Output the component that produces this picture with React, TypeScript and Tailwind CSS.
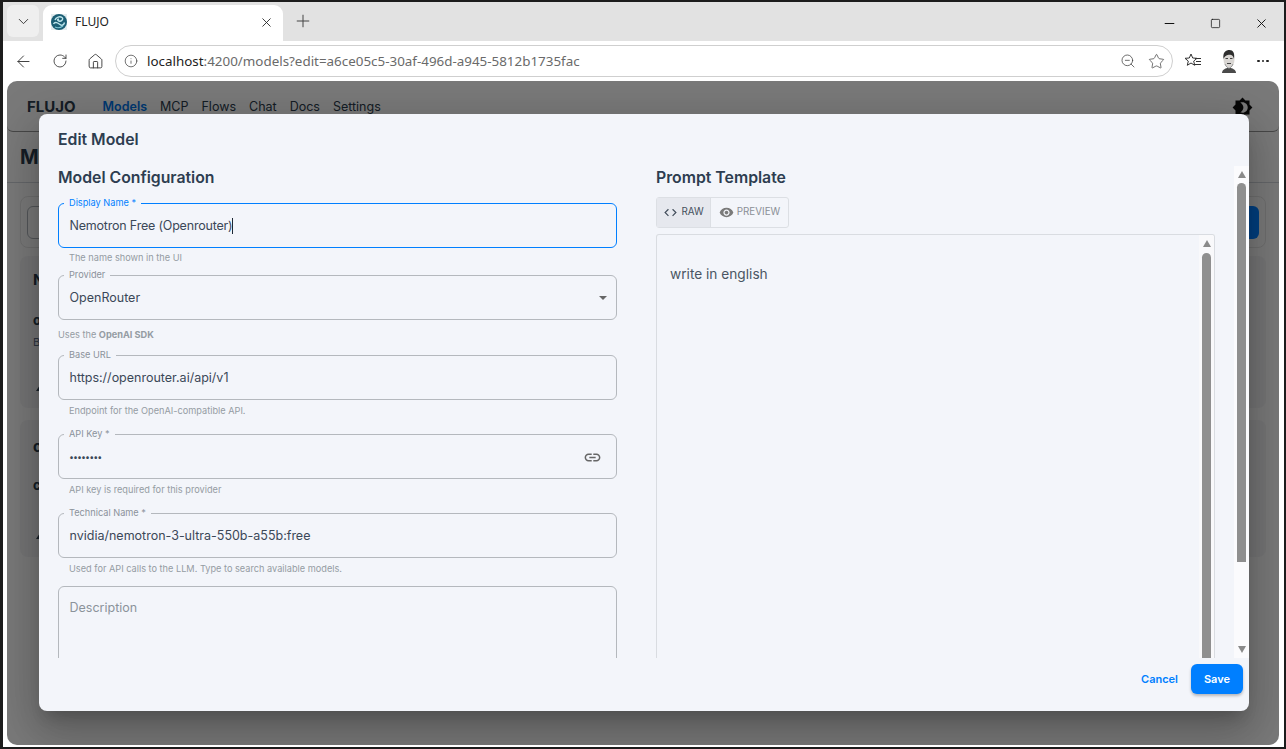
import { ReactNode } from "react";
import { ArrowLeft, ChevronDown, Home, Info, Minus, Plus, RotateCw, Square, Star, X, ZoomOut } from "lucide-react";
import { MdBrightness4, MdCode, MdLink, MdVisibility } from "react-icons/md";

const Field = ({ label, children, className, labelClass }: { label?: string; children?: ReactNode; className?: string; labelClass?: string }) => (
  <div className={`relative h-[45px] shrink-0 rounded-[6px] border flex items-center px-[10.5px] pt-[1px] text-[12.5px] text-[#3b4858] ${className ?? "border-[#b4b8bd]"}`}>
    {label && (
      <span className={`absolute left-[5px] top-[-7px] bg-[#f3f5fa] px-[5px] text-[9.2px] leading-[12px] ${labelClass ?? "text-[#8b929a]"}`}>{label}</span>
    )}
    {children}
  </div>
);

const Help = ({ children, className }: { children: ReactNode; className?: string }) => (
  <p className={`text-[9.2px] leading-[12px] text-[#959ca3] ${className ?? ""}`}>{children}</p>
);

const Arrow = ({ down }: { down?: boolean }) => (
  <div className={`w-0 h-0 mx-auto border-x-[4.5px] border-x-transparent ${down ? "border-t-[7px] border-t-[#8a8a8a]" : "border-b-[7px] border-b-[#8a8a8a]"}`} />
);

const CardArrow = () => (
  <div className="w-0 h-0 ml-[3px] border-x-[4px] border-x-transparent border-b-[6px] border-b-[#2a3a4a]" />
);

const App = () => {
  return (
    <div className="w-[1286px] h-[749px] overflow-hidden bg-[#1c1c1c] pt-[2px] pl-[3px] pr-[2px] pb-[2px] font-['Inter',sans-serif]">
      <div className="h-full flex flex-col bg-white">
        {/* tab strip */}
        <div className="h-[39px] shrink-0 bg-[#e2e2e2] flex items-end pl-[4px] font-['Noto_Sans',sans-serif]">
          <div className="w-[32px] h-[32px] mb-[4px] rounded-[6px] bg-[#efefef] flex items-center justify-center">
            <ChevronDown size={17} strokeWidth={1.3} className="text-[#333]" />
          </div>
          <div className="w-[240px] h-[36px] ml-[4px] pb-[2px] bg-white rounded-t-[9px] flex items-center pl-[8px] pr-[9px]">
            <svg width="16" height="16" viewBox="0 0 16 16">
              <rect width="16" height="16" fill="#e3ecee" />
              <circle cx="8" cy="8" r="8" fill="#1b5e74" />
              <path d="M2.500 10C4 7 7 9 9 10.500s4 .5 4.500-2M4 6c1-3 5-4 7-2.500S10 8 8 7 6 5.500 8 5" fill="none" stroke="#bfe6ec" strokeWidth="1.400" />
              <path d="M4 13c2 1 5 1 8-1" fill="none" stroke="#7fc4d2" strokeWidth="1.200" />
            </svg>
            <span className="ml-[8px] text-[12px] text-[#222]">FLUJO</span>
            <X size={15} strokeWidth={1.4} className="ml-auto text-[#222]" />
          </div>
          <Plus size={20} strokeWidth={1.2} className="ml-[10px] mb-[10px] text-[#444]" />
          <div className="ml-auto mb-[10px] flex items-center text-[#111]">
            <Minus size={15} strokeWidth={1.6} />
            <Square size={11} strokeWidth={1.6} className="ml-[33px] rounded-[2px]" />
            <X size={15} strokeWidth={1.5} className="ml-[33px] mr-[15px]" />
          </div>
        </div>
        {/* toolbar */}
        <div className="h-[40px] shrink-0 flex items-center pl-[11px] text-[#3a3a3a] font-['Noto_Sans',sans-serif]">
          <ArrowLeft size={19} strokeWidth={1.2} />
          <RotateCw size={16} strokeWidth={1.3} className="ml-[19px]" />
          <Home size={17} strokeWidth={1.3} className="ml-[19px]" />
          <div className="ml-[11px] w-[1058px] h-[32px] rounded-full border border-[#cfcfcf] flex items-center pl-[8px] pr-[7px]">
            <Info size={14} strokeWidth={1.2} />
            <span className="ml-[9px] text-[13.4px] text-[#6a6a6a] whitespace-nowrap">
              <span className="text-[#222]">localhost</span>:4200/models?edit=a6ce05c5-30af-496d-a945-5812b1735fac
            </span>
            <ZoomOut size={16} strokeWidth={1.1} className="ml-auto" />
            <Star size={17} strokeWidth={1} className="ml-[12px]" />
          </div>
          <svg width="18" height="18" viewBox="0 0 18 18" fill="none" stroke="#333" strokeWidth="1" className="ml-[11px]">
            <path d="M7 2l1.700 4 4.300.3-3.300 2.800 1 4.200L7 11l-3.700 2.300 1-4.200L1 6.300 5.300 6z" />
            <path d="M11 6.500h6M12 9.500h5M11 12.500h6" />
          </svg>
          <svg width="16" height="24" viewBox="0 0 16 24" className="ml-[19px]">
            <path d="M1 24c0-3 3-5 7-5s7 2 7 5z" fill="#4a4a4a" />
            <ellipse cx="8" cy="10.500" rx="5.500" ry="8" fill="#d9d6d3" />
            <path d="M2.500 10C1.500 3 5 1 8.500 1s5.500 3 4.500 9c-.7-3-1.500-4-3.500-4.300C7 5.400 4 6 2.500 10z" fill="#2e2e2e" />
            <path d="M4.500 9.500h2.500M9 9.500h2.500M6 14.500h4" stroke="#444" strokeWidth="1" />
            <path d="M4 15c1 3 3 4 4 4s3-1 4-4" fill="none" stroke="#999" strokeWidth="1" />
          </svg>
          <div className="ml-[20px] flex gap-[2px]">
            <span className="w-[2.500px] h-[2.500px] rounded-full bg-[#222]" />
            <span className="w-[2.500px] h-[2.500px] rounded-full bg-[#222]" />
            <span className="w-[2.500px] h-[2.500px] rounded-full bg-[#222]" />
          </div>
        </div>
        {/* page */}
        <div className="flex-1 ml-[4px] mr-[5px] mb-[2px] relative rounded-[10px] overflow-hidden bg-[#f2f2f2] text-[#2a3a4a]">
          <div className="h-[51px] border-b border-[#8f8f8f] rounded-b-[6px] flex items-center pl-[20px] pr-[26px] pt-[2px]">
            <span className="text-[15px] font-bold">FLUJO</span>
            <div className="ml-[27px] flex gap-[13px] text-[12.5px]">
              <span className="font-semibold text-[#0070e0]">Models</span>
              <span>MCP</span>
              <span>Flows</span>
              <span>Chat</span>
              <span>Docs</span>
              <span>Settings</span>
            </div>
            <MdBrightness4 size={21} className="ml-auto text-[#111]" />
          </div>
          <div className="h-[51px] border-b border-[#c9cdd2] px-[13px] flex items-center">
            <span className="text-[20px] font-bold">Models</span>
          </div>
          <div className="mx-[13px] mt-[13px] h-[52px] rounded-[8px] border border-[#dcdcdc] flex items-center px-[6px]">
            <div className="flex-1 h-[33px] rounded-[6px] border border-[#a8adb3]" />
            <div className="ml-[8px] w-[100px] h-[33px] rounded-[6px] bg-[#007fff]" />
          </div>
          <div className="mx-[13px] mt-[8px] h-[152px] rounded-[8px] bg-[#e9e9ea] px-[13px] pt-[15px] text-[11px] leading-[14px]">
            <p className="text-[15px] leading-[18px] font-bold">N</p>
            <p className="mt-[24px] text-[13px] font-bold">o</p>
            <p className="mt-[8px] text-[#5a6a80]">B</p>
            <div className="mt-[36px]">
              <CardArrow />
            </div>
          </div>
          <div className="mx-[13px] mt-[12px] h-[137px] rounded-[8px] bg-[#e9e9ea] px-[13px] pt-[19px] text-[11px] leading-[14px]">
            <p className="text-[15px] leading-[16px] font-bold">c</p>
            <p className="mt-[23px] text-[13px] font-bold">c</p>
            <div className="mt-[41px]">
              <CardArrow />
            </div>
          </div>

          {/* backdrop + dialog */}
          <div className="absolute inset-0 bg-black/50" />
          <div className="absolute left-[32px] top-[33px] w-[1210px] h-[597px] rounded-[8px] bg-[#f3f5fa] shadow-[0_11px_15px_-7px_rgba(0,0,0,0.2),0_24px_38px_3px_rgba(0,0,0,0.14),0_9px_46px_8px_rgba(0,0,0,0.12)] flex flex-col text-[#2d3d50]">
            <div className="h-[52px] shrink-0 pl-[19px] flex items-center">
              <h2 className="text-[15.8px] font-semibold">Edit Model</h2>
            </div>
            <div className="flex-1 min-h-0 flex pl-[19px] overflow-hidden">
              <div className="flex-1 min-w-0 flex overflow-hidden">
                {/* left column */}
                <div className="w-[559px] shrink-0 flex flex-col">
                  <h3 className="text-[15.8px] leading-[22px] font-semibold mt-[1px]">Model Configuration</h3>
                  <Field label="Display Name *" className="mt-[14px] border-[#007fff]" labelClass="text-[#007fff]">
                    <span className="tracking-[-0.2px]">Nemotron Free (Openrouter)</span>
                    <span className="w-px h-[16px] bg-[#1c2733]" />
                  </Field>
                  <Help className="mt-[4px] mb-[11px] pl-[11px]">The name shown in the UI</Help>
                  <Field label="Provider">
                    OpenRouter
                    <span className="ml-auto mr-[-1px] w-0 h-0 border-x-[4.5px] border-x-transparent border-t-[4.5px] border-t-[#666]" />
                  </Field>
                  <Help className="mt-[9px] mb-[14px]">
                    Uses the <b className="font-bold">OpenAI SDK</b>
                  </Help>
                  <Field label="Base URL">https://openrouter.ai/api/v1</Field>
                  <Help className="mt-[5px] mb-[17px] pl-[11px]">Endpoint for the OpenAI-compatible API.</Help>
                  <Field label="API Key *">
                    <span className="text-[8.5px] font-bold">••••••••</span>
                    <MdLink size={19} className="ml-auto text-[#666] mr-[4px]" />
                  </Field>
                  <Help className="mt-[5px] mb-[17px] pl-[11px]">API key is required for this provider</Help>
                  <Field label="Technical Name *">nvidia/nemotron-3-ultra-550b-a55b:free</Field>
                  <Help className="mt-[5px] mb-[11px] pl-[11px]">Used for API calls to the LLM. Type to search available models.</Help>
                  <div className="h-[110px] shrink-0 rounded-[6px] border border-[#b4b8bd] pl-[10.5px] pt-[13px] text-[12.5px] leading-[16px] text-[#8b939b]">Description</div>
                </div>
                {/* right column */}
                <div className="w-[559px] ml-[39px] shrink-0 flex flex-col">
                  <h3 className="text-[15.8px] leading-[22px] font-semibold mt-[1px]">Prompt Template</h3>
                  <div className="mt-[8px] w-[133px] h-[31px] shrink-0 rounded-[3px] border border-[#dcdfe4] flex text-[9.8px]">
                    <div className="w-[54px] bg-[#e6e8ee] border-r border-[#dcdfe4] flex items-center justify-center gap-[3px] text-[#444f5c]">
                      <MdCode size={15} />
                      RAW
                    </div>
                    <div className="flex-1 flex items-center justify-center gap-[3px] text-[#8a8f96]">
                      <MdVisibility size={15} className="text-[#7a7a7a]" />
                      PREVIEW
                    </div>
                  </div>
                  <div className="mt-[6px] flex-1 min-h-0 rounded-t-[3px] border border-b-0 border-[#d9dce1] flex overflow-hidden">
                    <div className="flex-1 pl-[13px] pt-[31px] text-[13.7px] leading-[16px] text-[#4a5563]">write in english</div>
                    <div className="w-[15px] shrink-0 bg-[#f9f9fb] pt-[5px]">
                      <Arrow />
                      <div className="mt-[6px] mx-auto w-[9px] h-[500px] rounded-t-full bg-[#8f8f8f]" />
                    </div>
                  </div>
                </div>
              </div>
              {/* dialog scrollbar */}
              <div className="w-[15px] ml-[19px] shrink-0 bg-[#fbfbfd] pt-[5px] pb-[5px] flex flex-col">
                <Arrow />
                <div className="mt-[5px] mx-auto w-[9px] h-[379px] rounded-t-full rounded-b-[3px] bg-[#8f8f8f]" />
                <div className="mt-auto">
                  <Arrow down />
                </div>
              </div>
            </div>
            <div className="h-[53px] shrink-0 flex items-start justify-end pt-[6px] pr-[6px] text-[11px] font-semibold">
              <button className="h-[30px] text-[#007fff]">Cancel</button>
              <button className="ml-[13px] w-[52px] h-[30px] rounded-[6px] bg-[#007fff] text-white shadow-[0_2px_3px_rgba(0,0,0,0.25)]">Save</button>
            </div>
          </div>
        </div>
      </div>
    </div>
  );
};

export default App;
